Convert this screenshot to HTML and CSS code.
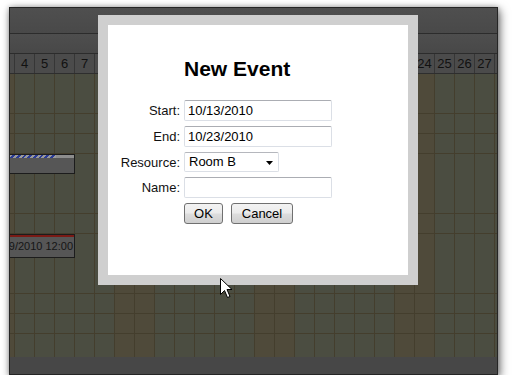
FILE: index.html
```html
<!DOCTYPE html>
<html lang="en">
<head>
  <meta name="viewport" content="width=device-width, initial-scale=1.0">
  <title>New Event</title>
  <link rel="stylesheet" href="styles.css">
</head>
<body>

<div class="window">
  <div class="band band-top"></div>
  <div class="band band-mid"></div>
  <div class="days">
    <span class="day first">3</span><span class="day">4</span><span class="day">5</span><span class="day">6</span><span class="day">7</span><span class="day">8</span><span class="day">9</span><span class="day">10</span><span class="day">11</span><span class="day">12</span><span class="day">13</span><span class="day">14</span><span class="day">15</span><span class="day">16</span><span class="day">17</span><span class="day">18</span><span class="day">19</span><span class="day">20</span><span class="day">21</span><span class="day">22</span><span class="day">23</span><span class="day">24</span><span class="day">25</span><span class="day">26</span><span class="day">27</span><span class="day">28</span>
  </div>

  <div class="grid">
    <div class="row h40"></div>
    <div class="row h20"></div>
    <div class="row h20"></div>
    <div class="row h60">
      <div class="event event-a">
        <div class="progress"></div>
      </div>
    </div>
    <div class="row h20"></div>
    <div class="row h60">
      <div class="event event-b">
        <div class="event-bar"></div>
        <div class="event-text">10/19/2010 12:00</div>
      </div>
    </div>
    <div class="row h20"></div>
    <div class="row h20"></div>
    <div class="row last"></div>
  </div>
  <div class="band band-bottom"></div>

  <!-- Modal dialog -->
  <div class="dialog">
    <div class="dialog-inner">
      <h1 class="title">New Event</h1>
      <div class="form">
        <label class="label">Start:</label>
        <input class="field" type="text" value="10/13/2010">
        <label class="label">End:</label>
        <input class="field" type="text" value="10/23/2010">
        <label class="label">Resource:</label>
        <div class="select">
          <span>Room B</span>
          <svg class="arrow" width="7" height="4" viewBox="0 0 7 4"><path d="M0 0H7L3.5 4Z" fill="#000"/></svg>
        </div>
        <label class="label">Name:</label>
        <input class="field" type="text" value="">
        <span></span>
        <div class="buttons">
          <button class="btn btn-ok">OK</button>
          <button class="btn btn-cancel">Cancel</button>
        </div>
      </div>
    </div>
  </div>
</div>

<svg class="cursor" width="13" height="20" viewBox="0 0 13 20">
  <path d="M0.5 0.5V16.5L4.5 12.5L7.5 19.5L10 18.5L7 11.5H12Z" fill="#fff" stroke="#000" stroke-width="1" stroke-linejoin="miter"/>
</svg>

</body>
</html>
```

FILE: styles.css
```css
body {
  margin: 0;
  background: #fff;
  font-family: "Liberation Sans", Arial, sans-serif;
  font-size: 13px;
  overflow: hidden;
}

/* Scheduler window */
.window {
  position: relative;
  margin: 7px 0 0 9px;
  width: 487px;
  height: 366px;
  border: 1px solid #252525;
  background: #4a4a4a;
  overflow: hidden;
  box-shadow: 2px 3px 9px rgba(0, 0, 0, 0.55), 0 0 5px rgba(0, 0, 0, 0.25);
}

.band {
  background: #4b4b4b;
  border-bottom: 1px solid #2c2c2c;
}

.band-top {
  height: 25px;
  background: linear-gradient(#4f4f4f, #494949);
}

.band-mid {
  height: 19px;
  background: linear-gradient(#4e4e4e, #484848);
}

.band-bottom {
  height: 17px;
  background: #474747;
  border-bottom: none;
}

/* Day header */
.days {
  display: flex;
  height: 19px;
  background: #4b4b4b;
  border-bottom: 1px solid #2e2e2e;
  white-space: nowrap;
}

.day {
  flex: 0 0 20px;
  box-sizing: border-box;
  border-right: 1px solid #363636;
  text-align: center;
  line-height: 19px;
  color: #111;
  font-size: 13px;
}

.day.first {
  margin-left: -15px;
}

/* Grid */
.row {
  position: relative;
  box-sizing: border-box;
  border-bottom: 1px solid #443e2d;
  background:
    linear-gradient(90deg, transparent 19px, #443e2d 19px) 5px 0 / 20px 100% repeat-x,
    linear-gradient(90deg, #4f4a3a 40px, #4b4d41 40px) 105px 0 / 140px 100% repeat-x;
}

.h20 { height: 20px; }
.h40 { height: 40px; }
.h60 { height: 60px; }

.row.last {
  height: 23px;
  border-bottom: none;
}

/* Events */
.event {
  position: absolute;
  top: 0;
  left: -100px;
  width: 165px;
  box-sizing: border-box;
  border: 1px solid #1c1c1c;
  background: #565656;
}

.event-a {
  height: 20px;
}

.event-a .progress {
  height: 3px;
  background: #8d8d8d;
  position: relative;
}

.event-a .progress::before {
  content: "";
  position: absolute;
  left: 0;
  top: 0;
  width: 145px;
  height: 3px;
  background: repeating-linear-gradient(135deg, #2b3c96 0 2px, #9a9a9a 2px 4px);
}

.event-b {
  height: 24px;
}

.event-bar {
  height: 2px;
  background: #7a1a15;
}

.event-text {
  text-align: right;
  padding-right: 1px;
  font-size: 11px;
  line-height: 19px;
  color: #151515;
  white-space: nowrap;
}

/* Dialog */
.dialog {
  position: absolute;
  left: 88px;
  top: 7px;
  width: 300px;
  height: 250px;
  border: 10px solid #cfcfcf;
  background: #fff;
}

.dialog-inner {
  padding-top: 32px;
}

.title {
  margin: 0 0 19px 0;
  padding-left: 76px;
  font-size: 21px;
  line-height: 24px;
  font-weight: bold;
  color: #000;
}

.form {
  display: grid;
  grid-template-columns: 72px 148px;
  grid-template-rows: 21px 21px 20px 21px 21px;
  column-gap: 4px;
  row-gap: 5px;
  align-items: center;
}

.label {
  text-align: right;
  color: #111;
}

.field {
  box-sizing: border-box;
  width: 148px;
  height: 21px;
  margin: 0;
  padding: 0 3px;
  border: 1px solid #dbdfe6;
  border-top-color: #abadb3;
  border-radius: 2px;
  font-family: "Liberation Sans", Arial, sans-serif;
  font-size: 13px;
  color: #000;
  outline: none;
}

.select {
  position: relative;
  box-sizing: border-box;
  width: 95px;
  height: 20px;
  padding-left: 4px;
  border: 1px solid #dbdfe6;
  border-top-color: #b5b7bd;
  border-radius: 2px;
  line-height: 18px;
  color: #000;
}

.select .arrow {
  position: absolute;
  right: 5px;
  top: 8px;
}

.buttons {
  display: flex;
  gap: 8px;
}

.btn {
  box-sizing: border-box;
  height: 21px;
  padding: 0;
  border: 1px solid #707070;
  border-radius: 3px;
  background: linear-gradient(#f3f3f3 0%, #ebebeb 48%, #dddddd 52%, #cfcfcf 100%);
  font-family: "Liberation Sans", Arial, sans-serif;
  font-size: 13px;
  color: #000;
}

.btn-ok {
  width: 39px;
}

.btn-cancel {
  width: 62px;
}

/* Mouse pointer */
.cursor {
  position: absolute;
  left: 220px;
  top: 278px;
}
```
